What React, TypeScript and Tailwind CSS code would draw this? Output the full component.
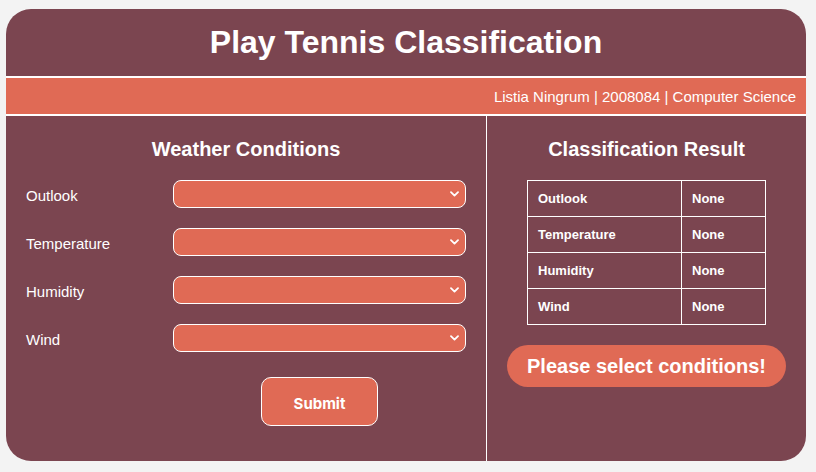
import React from 'react';

const fields = ['Outlook', 'Temperature', 'Humidity', 'Wind'];

const Chevron = () => (
  <svg
    className="pointer-events-none absolute right-[7px] top-1/2 -translate-y-1/2"
    width="9"
    height="6"
    viewBox="0 0 9 6"
    fill="none"
  >
    <path d="M1 1.2 L4.5 4.6 L8 1.2" stroke="#ffffff" strokeWidth="1.8" strokeLinecap="round" strokeLinejoin="round" />
  </svg>
);

const App = () => {
  return (
    <div className="min-h-[472px] bg-[#f3f3f3] pt-[9px] pl-[6px] font-['Liberation_Sans',Arial,sans-serif]">
      <div className="w-[800px] h-[452px] rounded-[25px] overflow-hidden bg-[#7b4550] text-white flex flex-col">
        {/* header */}
        <div className="h-[67px] flex items-center justify-center">
          <h1 className="text-[32px] font-bold leading-[37px]">Play Tennis Classification</h1>
        </div>
        <div className="h-[40px] border-y-2 border-white bg-[#e06a55] flex items-center justify-end pr-[10px]">
          <p className="text-[15px] leading-[17px]">Listia Ningrum | 2008084 | Computer Science</p>
        </div>

        <div className="flex flex-1">
          {/* form */}
          <div className="w-[480px] px-[20px] pt-[22px]">
            <h2 className="text-center text-[20px] font-bold leading-[23px]">Weather Conditions</h2>
            <div className="mt-[19px] flex flex-col gap-[20px]">
              {fields.map((f) => (
                <div key={f} className="grid grid-cols-[147px_293px] items-center">
                  <label className="text-[15px] leading-[17px] pt-[2px]">{f}</label>
                  <div className="relative">
                    <select className="appearance-none w-full h-[28px] rounded-[8px] border border-white bg-[#e06a55] text-white text-[14px] px-2 outline-none">
                      <option value=""></option>
                    </select>
                    <Chevron />
                  </div>
                </div>
              ))}
            </div>
            <div className="grid grid-cols-[147px_293px] mt-[25px]">
              <div />
              <div className="flex justify-center">
                <button className="w-[117px] h-[49px] pt-[5px] rounded-[10px] border border-white bg-[#e06a55] text-white text-[15px] font-bold font-['Inter',sans-serif]">
                  Submit
                </button>
              </div>
            </div>
          </div>

          {/* result */}
          <div className="flex-1 border-l border-white pt-[22px] flex flex-col items-center">
            <h2 className="text-center text-[20px] font-bold leading-[23px]">Classification Result</h2>
            <table className="mt-[19px] w-[239px] border-collapse text-[13px] font-bold">
              <tbody>
                {fields.map((f) => (
                  <tr key={f} className="h-[36px]">
                    <td className="w-[154px] border border-white pl-[10px]">{f}</td>
                    <td className="border border-white pl-[10px]">None</td>
                  </tr>
                ))}
              </tbody>
            </table>
            <div className="mt-[20px] h-[42px] px-[20px] rounded-full bg-[#e06a55] flex items-center">
              <span className="text-[20px] font-bold leading-[23px]">Please select conditions!</span>
            </div>
          </div>
        </div>
      </div>
    </div>
  );
};

export default App;
